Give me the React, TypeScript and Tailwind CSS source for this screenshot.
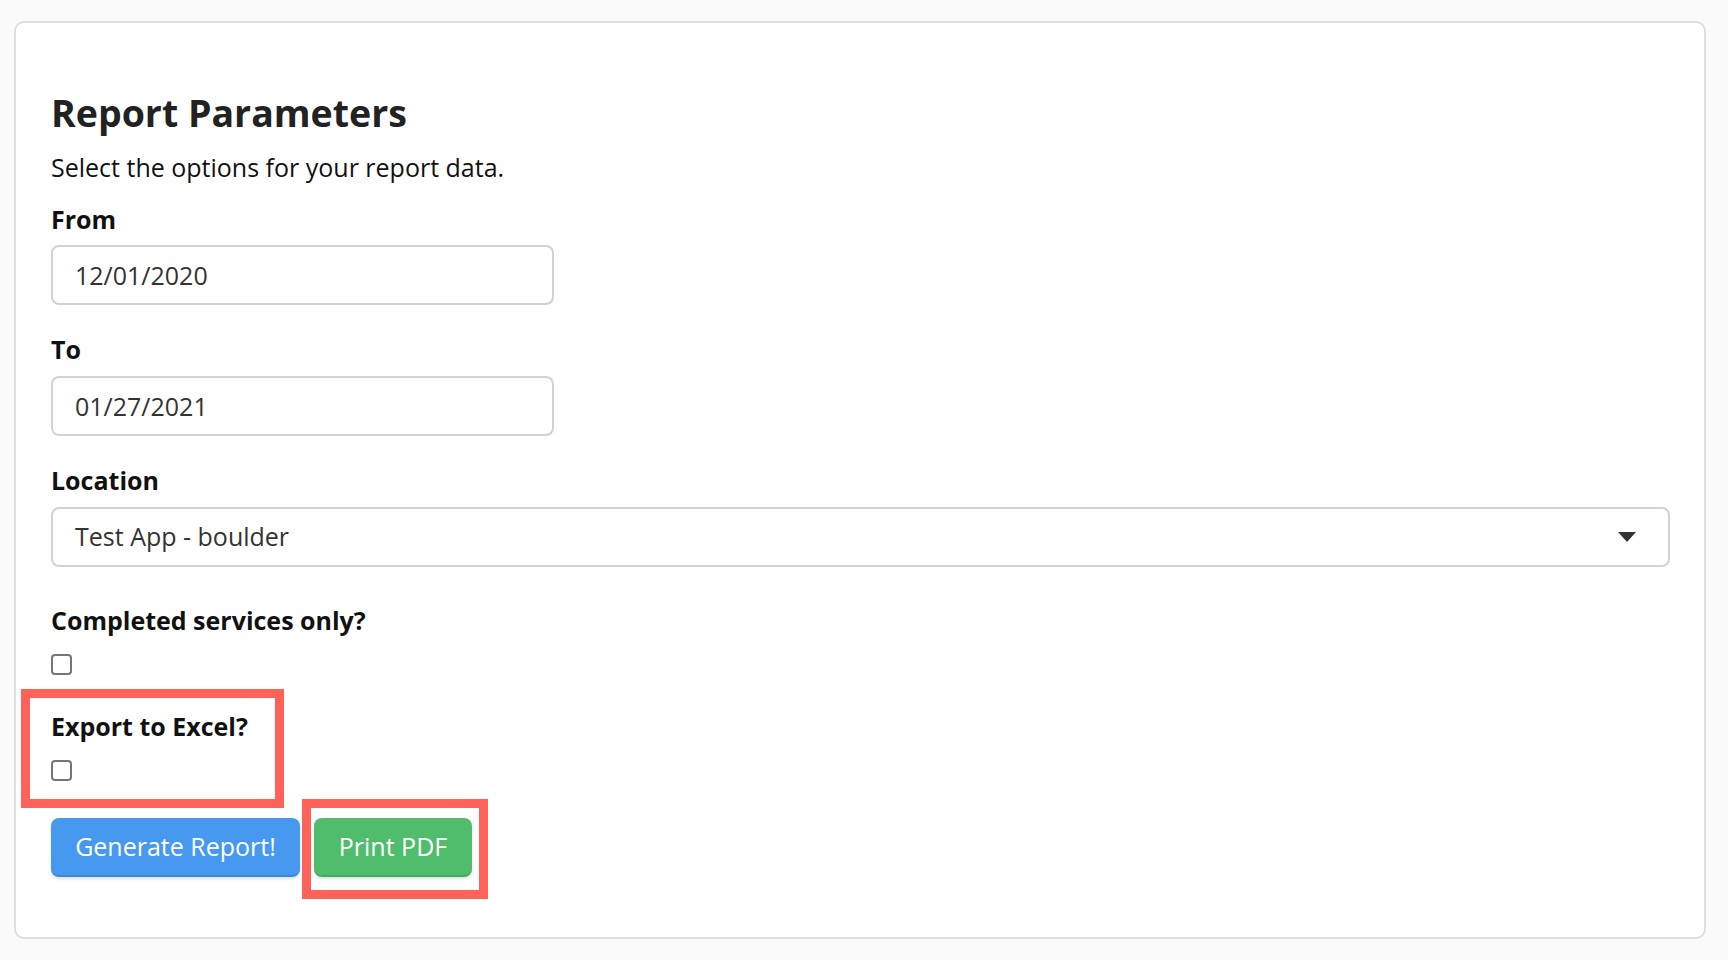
import { useState } from "react";

function Checkbox({
  checked,
  onChange,
}: {
  checked: boolean;
  onChange: (v: boolean) => void;
}) {
  return (
    <input
      type="checkbox"
      checked={checked}
      onChange={(e) => onChange(e.target.checked)}
      className="block appearance-none w-[21px] h-[21px] border-2 border-[#767676] rounded-[4px] bg-white checked:bg-[#4699ee] checked:border-[#4699ee] m-0"
    />
  );
}

export default function App() {
  const [from, setFrom] = useState("12/01/2020");
  const [to, setTo] = useState("01/27/2021");
  const [completedOnly, setCompletedOnly] = useState(false);
  const [exportExcel, setExportExcel] = useState(false);

  return (
    <div
      className="min-h-[960px] bg-[#fafafa] pt-[21px] pl-[14px]"
      style={{ fontFamily: '"Open Sans", "Liberation Sans", sans-serif' }}
    >
      <div className="w-[1692px] h-[918px] bg-white border-2 border-[#dedede] rounded-[10px] pt-[68px] pl-[35px] pr-[34px] text-[25px] text-[#111]">
        <h2 className="text-[37.5px] font-bold leading-[43px] text-[#222]">
          Report Parameters
        </h2>
        <p className="mt-[15px] leading-[36px] text-[#111]">
          Select the options for your report data.
        </p>

        <form onSubmit={(e) => e.preventDefault()}>
          <label className="block mt-[16px] mb-[8px] font-bold leading-[36px]">
            From
          </label>
          <input
            value={from}
            onChange={(e) => setFrom(e.target.value)}
            className="block w-[503px] h-[60px] border-2 border-[#d2d2d2] rounded-[8px] px-[22px] text-[25px] text-[#333] outline-none"
          />

          <label className="block mt-[26px] mb-[9px] font-bold leading-[36px]">
            To
          </label>
          <input
            value={to}
            onChange={(e) => setTo(e.target.value)}
            className="block w-[503px] h-[60px] border-2 border-[#d2d2d2] rounded-[8px] px-[22px] text-[25px] text-[#333] outline-none"
          />

          <label className="block mt-[26px] mb-[9px] font-bold leading-[36px]">
            Location
          </label>
          <div className="flex items-center justify-between h-[60px] border-2 border-[#d2d2d2] rounded-[8px] pl-[22px] pr-[32px] text-[#333]">
            <span>Test App - boulder</span>
            <svg width="18" height="10" viewBox="0 0 18 10">
              <path d="M0 0 H18 L9 10 Z" fill="#333" />
            </svg>
          </div>

          <label className="block mt-[35px] mb-[16px] font-bold leading-[36px]">
            Completed services only?
          </label>
          <Checkbox checked={completedOnly} onChange={setCompletedOnly} />

          <div className="relative mt-[33px]">
            <div className="absolute left-[-30px] top-[-19px] w-[263px] h-[119px] border-[9px] border-[#fe6259]" />
            <label className="block mb-[16px] font-bold leading-[36px]">
              Export to Excel?
            </label>
            <Checkbox checked={exportExcel} onChange={setExportExcel} />
          </div>

          <div className="flex gap-[14px] mt-[37px]">
            <button
              type="submit"
              className="h-[59px] w-[249px] rounded-[8px] bg-[#4699ee] border-b-2 border-[#3d88d6] text-white text-[25px] shadow-[0_2px_3px_rgba(0,0,0,0.12)]"
            >
              Generate Report!
            </button>
            <div className="relative">
              <div className="absolute left-[-12px] top-[-19px] w-[186px] h-[100px] border-[9px] border-[#fe6259]" />
              <button
                type="button"
                className="relative h-[59px] w-[158px] rounded-[8px] bg-[#4fbd6b] border-b-2 border-[#45a95e] text-white text-[25px] shadow-[0_2px_3px_rgba(0,0,0,0.12)]"
              >
                Print PDF
              </button>
            </div>
          </div>
        </form>
      </div>
    </div>
  );
}
